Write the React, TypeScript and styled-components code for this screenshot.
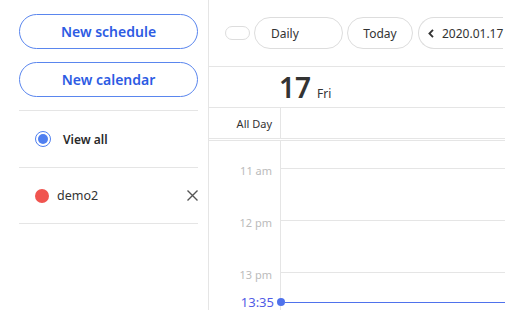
import React from "react"
import styled, { createGlobalStyle } from "styled-components"

const GlobalStyle = createGlobalStyle`
  html, body {
    margin: 0;
    padding: 0;
    background: #ffffff;
  }
  body {
    font-family: "Noto Sans", "Open Sans", sans-serif;
    color: #333333;
  }
  * {
    box-sizing: border-box;
  }
`

const HOUR_HEIGHT = 52
const FIRST_OFFSET = 27
const FIRST_HOUR = 11
const hours = ["11 am", "12 pm", "13 pm"]
const now = { h: 13, m: 35 }

interface Calendar {
  id: string
  name: string
  color: string
}

const calendars: Calendar[] = [{ id: "1", name: "demo2", color: "#f0544f" }]

const CloseIcon = () => (
  <svg width="11" height="11" viewBox="0 0 11 11">
    <path d="M0.5 0.5 L10.5 10.5 M10.5 0.5 L0.5 10.5" stroke="#555" strokeWidth="1.4" fill="none" />
  </svg>
)

const ChevronLeft = () => (
  <svg width="6" height="9" viewBox="0 0 6 9">
    <path d="M5 0.8 L1.4 4.5 L5 8.2" stroke="#333" strokeWidth="1.8" fill="none" />
  </svg>
)

export default function App() {
  const nowTop = FIRST_OFFSET + (now.h - FIRST_HOUR) * HOUR_HEIGHT + (now.m / 60) * HOUR_HEIGHT
  const nowLabel = `${now.h}:${String(now.m).padStart(2, "0")}`

  return (
    <S.Page>
      <GlobalStyle />
      <S.Sidebar>
        <S.ActionButton>New schedule</S.ActionButton>
        <S.ActionButton>New calendar</S.ActionButton>
        <S.CalendarList>
          <S.CalendarRow>
            <S.Radio />
            <S.ViewAll>View all</S.ViewAll>
          </S.CalendarRow>
          {calendars.map((c) => (
            <S.CalendarRow key={c.id}>
              <S.Dot $color={c.color} />
              <S.CalendarName>{c.name}</S.CalendarName>
              <S.RemoveButton>
                <CloseIcon />
              </S.RemoveButton>
            </S.CalendarRow>
          ))}
        </S.CalendarList>
      </S.Sidebar>

      <S.Main>
        <S.Toolbar>
          <S.TogglePill />
          <S.NavButton $width={89} $align="left">
            Daily
          </S.NavButton>
          <S.NavButton $width={66}>Today</S.NavButton>
          <S.DateNav>
            <ChevronLeft />
            <span>2020.01.17</span>
          </S.DateNav>
        </S.Toolbar>

        <S.DayHeader>
          <S.DayNumber>17</S.DayNumber>
          <S.DayName>Fri</S.DayName>
        </S.DayHeader>

        <S.AllDayRow>
          <S.AllDayLabel>All Day</S.AllDayLabel>
          <S.AllDayCell />
        </S.AllDayRow>

        <S.TimeGrid>
          <S.TimeColumn>
            <S.Spacer />
            {hours.map((h) => (
              <S.HourLabel key={h}>{h}</S.HourLabel>
            ))}
          </S.TimeColumn>
          <S.DayColumn>
            <S.Spacer />
            {hours.map((h) => (
              <S.HourSlot key={h} />
            ))}
          </S.DayColumn>
          <S.NowIndicator style={{ top: nowTop }}>
            <S.NowLabel>{nowLabel}</S.NowLabel>
            <S.NowDot />
            <S.NowLine />
          </S.NowIndicator>
        </S.TimeGrid>
      </S.Main>
    </S.Page>
  )
}

const S = {
  Page: styled.div`
    display: flex;
    width: 100vw;
    height: 100vh;
    overflow: hidden;
  `,
  Sidebar: styled.div`
    width: 209px;
    flex-shrink: 0;
    border-right: 1px solid #e5e5e5;
    padding: 14px 10px 0 19px;
    display: flex;
    flex-direction: column;
    gap: 13px;
  `,
  ActionButton: styled.button`
    height: 35px;
    width: 100%;
    border: 1px solid #5a86ee;
    border-radius: 18px;
    background: #ffffff;
    color: #2d5be3;
    font-family: inherit;
    font-size: 14px;
    font-weight: 600;
    padding: 0;
    cursor: pointer;
  `,
  CalendarList: styled.div`
    display: flex;
    flex-direction: column;
    border-top: 1px solid #e5e5e5;
  `,
  CalendarRow: styled.div`
    display: flex;
    align-items: center;
    padding-left: 16px;
    border-bottom: 1px solid #e5e5e5;
    height: 57px;
    &:last-child {
      height: 56px;
    }
  `,
  Radio: styled.span`
    width: 16px;
    height: 16px;
    border-radius: 50%;
    border: 1px solid #4f7ff0;
    padding: 2px;
    margin-right: 12px;
    &::after {
      content: "";
      display: block;
      width: 100%;
      height: 100%;
      border-radius: 50%;
      background: #4f7ff0;
    }
  `,
  ViewAll: styled.span`
    font-size: 12px;
    font-weight: 600;
    color: #2a2a2a;
  `,
  Dot: styled.span<{ $color: string }>`
    width: 14px;
    height: 14px;
    border-radius: 50%;
    background: ${(p) => p.$color};
    margin-right: 8px;
  `,
  CalendarName: styled.span`
    flex: 1;
    font-size: 12.5px;
    color: #333333;
  `,
  RemoveButton: styled.span`
    display: flex;
    width: 11px;
    height: 11px;
  `,
  Main: styled.div`
    flex: 1;
    min-width: 0;
    display: flex;
    flex-direction: column;
  `,
  Toolbar: styled.div`
    height: 67px;
    flex-shrink: 0;
    border-bottom: 1px solid #e5e5e5;
    display: flex;
    align-items: center;
    gap: 4px;
    padding: 0 0 0 16px;
    white-space: nowrap;
  `,
  TogglePill: styled.span`
    width: 25px;
    height: 14px;
    border: 1px solid #dddddd;
    border-radius: 7px;
    flex-shrink: 0;
  `,
  NavButton: styled.span<{ $width: number; $align?: "left" | "center" }>`
    width: ${(p) => p.$width}px;
    height: 32px;
    flex-shrink: 0;
    border: 1px solid #dddddd;
    border-radius: 16px;
    display: flex;
    align-items: center;
    justify-content: ${(p) => (p.$align === "left" ? "flex-start" : "center")};
    padding-left: ${(p) => (p.$align === "left" ? "16px" : "0")};
    font-size: 12px;
    color: #333333;
  `,
  DateNav: styled.span`
    height: 32px;
    flex-shrink: 0;
    margin-left: 1px;
    border: 1px solid #dddddd;
    border-right: none;
    border-radius: 16px 0 0 16px;
    display: flex;
    align-items: center;
    gap: 8px;
    padding: 0 0 0 9px;
    font-size: 12px;
    color: #333333;
  `,
  DayHeader: styled.div`
    height: 41px;
    flex-shrink: 0;
    border-bottom: 1px solid #e5e5e5;
    display: flex;
    align-items: baseline;
    padding: 6px 0 0 70px;
  `,
  DayNumber: styled.span`
    font-size: 28px;
    line-height: 28px;
    font-weight: 600;
    color: #333333;
  `,
  DayName: styled.span`
    font-size: 12px;
    margin-left: 6px;
    color: #333333;
  `,
  AllDayRow: styled.div`
    height: 33px;
    flex-shrink: 0;
    display: flex;
    border-bottom: 3px double #e5e5e5;
  `,
  AllDayLabel: styled.div`
    width: 72px;
    border-right: 1px solid #e5e5e5;
    display: flex;
    align-items: center;
    justify-content: flex-end;
    padding-right: 8px;
    font-size: 11px;
    color: #333333;
  `,
  AllDayCell: styled.div`
    flex: 1;
  `,
  TimeGrid: styled.div`
    flex: 1;
    display: flex;
    position: relative;
    overflow: hidden;
  `,
  TimeColumn: styled.div`
    width: 72px;
    flex-shrink: 0;
    border-right: 1px solid #e5e5e5;
    display: flex;
    flex-direction: column;
  `,
  DayColumn: styled.div`
    flex: 1;
    display: flex;
    flex-direction: column;
  `,
  Spacer: styled.div`
    height: ${FIRST_OFFSET}px;
    flex-shrink: 0;
  `,
  HourLabel: styled.div`
    height: ${HOUR_HEIGHT}px;
    flex-shrink: 0;
    text-align: right;
    padding-right: 8px;
    font-size: 11px;
    line-height: 12px;
    margin-top: -3px;
    margin-bottom: 3px;
    color: #bbbbbb;
  `,
  HourSlot: styled.div`
    height: ${HOUR_HEIGHT}px;
    flex-shrink: 0;
    border-top: 1px solid #e5e5e5;
  `,
  NowIndicator: styled.div`
    position: absolute;
    left: 0;
    right: 0;
    height: 0;
    display: flex;
    align-items: center;
  `,
  NowLabel: styled.span`
    width: 68px;
    text-align: right;
    padding-right: 3px;
    font-size: 13px;
    color: #515ce6;
  `,
  NowDot: styled.span`
    width: 8px;
    height: 8px;
    border-radius: 50%;
    background: #4f72ec;
    flex-shrink: 0;
  `,
  NowLine: styled.span`
    flex: 1;
    height: 1px;
    background: #4f72ec;
  `,
}
